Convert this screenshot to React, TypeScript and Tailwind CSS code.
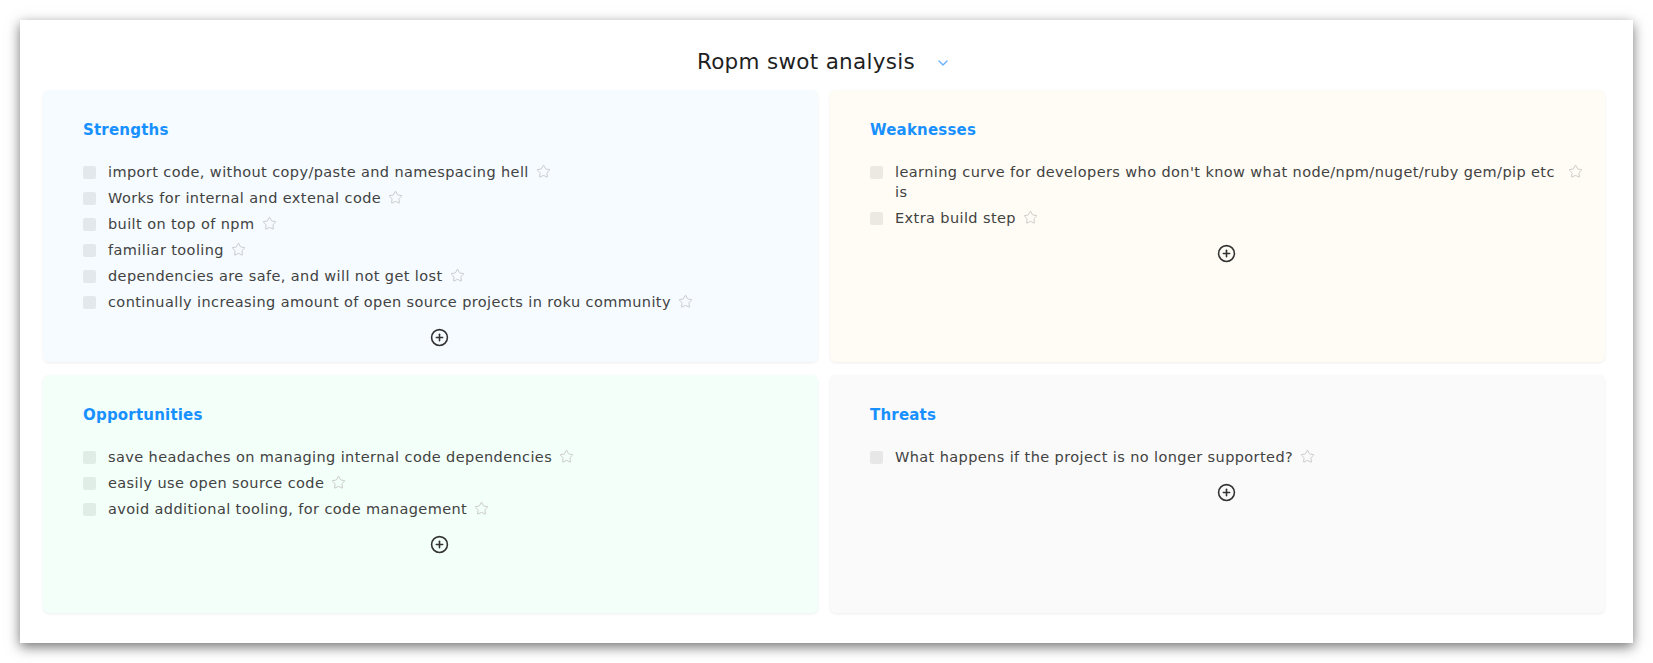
import React from "react";
import { CirclePlus, Star, ChevronDown } from "lucide-react";

type Section = { title: string; bg: string; items: string[] };

const sections: Section[] = [
  {
    title: "Strengths",
    bg: "bg-[#f5fbff]",
    items: [
      "import code, without copy/paste and namespacing hell",
      "Works for internal and extenal code",
      "built on top of npm",
      "familiar tooling",
      "dependencies are safe, and will not get lost",
      "continually increasing amount of open source projects in roku community",
    ],
  },
  {
    title: "Weaknesses",
    bg: "bg-[#fffcf5]",
    items: [
      "learning curve for developers who don't know what node/npm/nuget/ruby gem/pip etc is",
      "Extra build step",
    ],
  },
  {
    title: "Opportunities",
    bg: "bg-[#f3fff9]",
    items: [
      "save headaches on managing internal code dependencies",
      "easily use open source code",
      "avoid additional tooling, for code management",
    ],
  },
  {
    title: "Threats",
    bg: "bg-[#fafafa]",
    items: ["What happens if the project is no longer supported?"],
  },
];

function Panel({ s, minH }: { s: Section; minH: string }) {
  return (
    <div
      className={`${s.bg} ${minH} rounded-[6px] shadow-[0_1px_3px_rgba(0,0,0,0.07)] pl-[40px] pr-[22px] pt-[28px] pb-[13px] flex flex-col`}
    >
      <h2 className="text-[15px] leading-[24px] font-bold tracking-[0.2px] text-[#1890ff]">{s.title}</h2>
      <ul className="mt-[20px] flex flex-col gap-[6px]">
        {s.items.map((it, i) => (
          <li key={i} className="flex items-start">
            <span className="mt-[3.5px] w-[13px] h-[13px] shrink-0 rounded-[2px] bg-[rgba(0,0,0,0.075)]" />
            <span className="ml-[12px] text-[14.5px] leading-[20px] tracking-[0.4px] text-[#424242]">{it}</span>
            <Star
              className="ml-[7px] mt-[2px] shrink-0 text-[#c4c4c4]"
              size={15}
              strokeWidth={1.4}
            />
          </li>
        ))}
      </ul>
      <div className="mt-[16px] flex justify-center">
        <CirclePlus size={19} strokeWidth={2} className="text-[#333]" />
      </div>
    </div>
  );
}

export default function App() {
  return (
    <div
      className="w-[1653px] h-[663px] bg-white p-[20px]"
      style={{ fontFamily: '"DejaVu Sans", "Noto Sans", sans-serif' }}
    >
      <div className="w-full h-full bg-white shadow-[0_4px_12px_rgba(0,0,0,0.55)] pt-[28px] pl-[23px] pr-[28px] pb-[30px] flex flex-col">
        <div className="h-[28px] mb-[14px] flex items-center justify-center">
          <span className="text-[21.5px] leading-[28px] tracking-[0.3px] text-[#1f1f1f]">Ropm swot analysis</span>
          <ChevronDown size={16} strokeWidth={2} className="ml-[20px] mt-[2px] text-[#69b1ff]" />
        </div>
        <div className="grid grid-cols-2 gap-x-[12px] gap-y-[13px]">
          <Panel s={sections[0]} minH="min-h-[272px]" />
          <Panel s={sections[1]} minH="min-h-[272px]" />
          <Panel s={sections[2]} minH="min-h-[238px]" />
          <Panel s={sections[3]} minH="min-h-[238px]" />
        </div>
      </div>
    </div>
  );
}
